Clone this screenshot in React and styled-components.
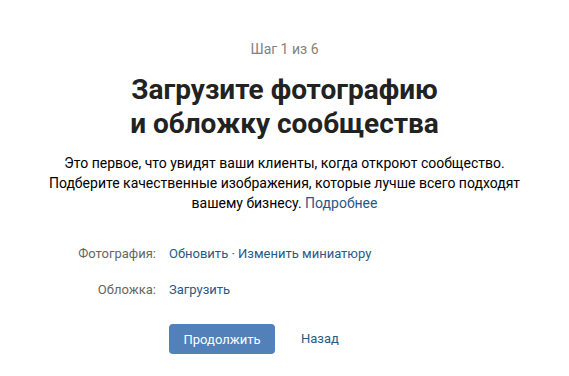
import React from "react";
import styled, { createGlobalStyle } from "styled-components";

const Global = createGlobalStyle`
  html, body { margin: 0; padding: 0; background: #fff; }
  body { font-family: Roboto, "Open Sans", Arial, sans-serif; -webkit-font-smoothing: antialiased; }
`;

const Page = styled.div`
  display: flex;
  flex-direction: column;
  align-items: center;
  padding-top: 40px;
`;

const Step = styled.div`
  font-size: 14px;
  line-height: 18px;
  color: #828282;
`;

const Title = styled.h1`
  margin: 15px 0 0;
  font-size: 28px;
  line-height: 34px;
  font-weight: 700;
  color: #222;
  text-align: center;
`;

const Description = styled.p`
  margin: 12px 0 0;
  width: 480px;
  font-size: 14px;
  line-height: 20px;
  color: #000;
  text-align: center;
`;

const Link = styled.a`
  color: #2a5885;
  text-decoration: none;
  cursor: pointer;
`;

const Form = styled.div`
  display: grid;
  grid-template-columns: 156px auto;
  column-gap: 13px;
  row-gap: 16px;
  align-self: flex-start;
  margin-top: 31px;
  font-size: 13px;
  line-height: 20px;
`;

const Label = styled.div`
  color: #656565;
  text-align: right;
`;

const Value = styled.div`
  color: #2a5885;
`;

const Actions = styled.div`
  grid-column: 2;
  display: flex;
  align-items: center;
  gap: 26px;
  margin-top: 8px;
`;

const Button = styled.button`
  height: 30px;
  width: 106px;
  border: none;
  border-radius: 4px;
  background: #5181b8;
  color: #fff;
  font-family: inherit;
  font-size: 13px;
  cursor: pointer;
`;

export default function App() {
  return (
    <>
      <Global />
      <Page>
        <Step>Шаг 1 из 6</Step>
        <Title>
          Загрузите фотографию
          <br />
          и обложку сообщества
        </Title>
        <Description>
          Это первое, что увидят ваши клиенты, когда откроют сообщество.
          Подберите качественные изображения, которые лучше всего подходят
          вашему бизнесу. <Link>Подробнее</Link>
        </Description>
        <Form>
          <Label>Фотография:</Label>
          <Value>
            <Link>Обновить</Link> · <Link>Изменить миниатюру</Link>
          </Value>
          <Label>Обложка:</Label>
          <Value>
            <Link>Загрузить</Link>
          </Value>
          <Actions>
            <Button>Продолжить</Button>
            <Link>Назад</Link>
          </Actions>
        </Form>
      </Page>
    </>
  );
}
